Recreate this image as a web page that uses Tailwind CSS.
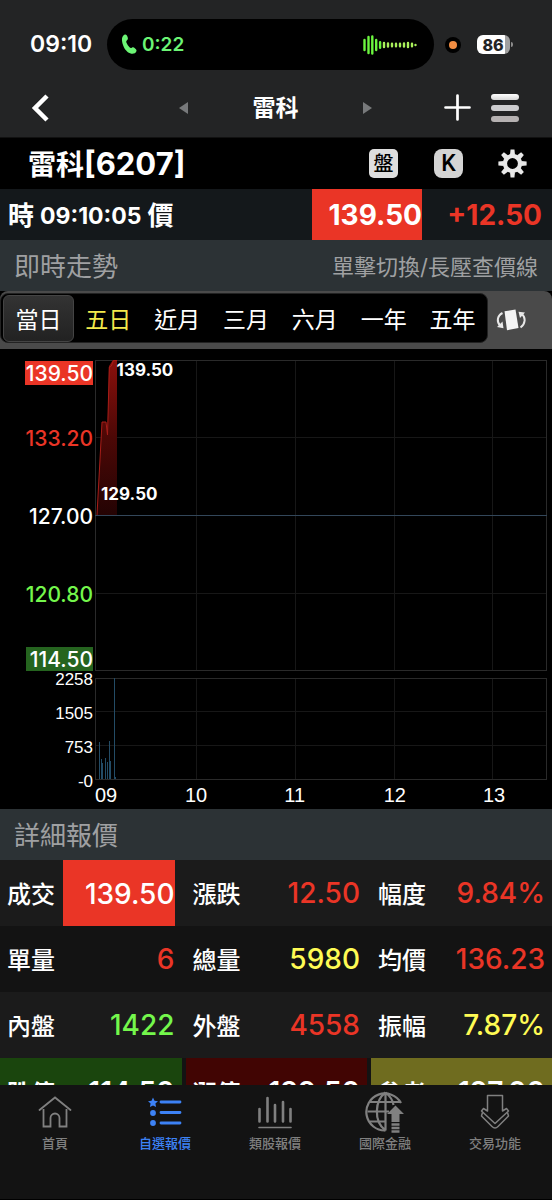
<!DOCTYPE html>
<html lang="zh-Hant">
<head>
<meta charset="utf-8">
<meta name="viewport" content="width=device-width, initial-scale=1">
<title>雷科 6207</title>
<script src="https://cdn.jsdelivr.net/npm/@tailwindcss/browser@4"></script>
</head>
<body class="flex h-screen flex-col overflow-hidden bg-black font-['Inter','Noto_Sans_CJK_TC',sans-serif] text-white">

<header class="shrink-0 bg-[#232425] pt-[19px]">
  <!-- status bar -->
  <div class="flex h-[51px] items-center pl-[30px] pr-[39px]">
    <span class="w-[77px] text-[23px] leading-none font-semibold">09:10</span>
    <div class="flex h-[51px] flex-1 items-center rounded-full bg-black pl-[14px] pr-[17px] text-[#6cf575]">
      <svg class="h-[21px] w-4" viewBox="0 0 16 21" fill="currentColor" aria-hidden="true"><path d="M1 4.500C1.300 2 2.800.5 4.300.4c1.200 0 1.700 1 2.300 2.700.6 1.800.3 2.500-.8 3.500-.7.7-.7 1.300-.2 2.400.7 1.600 1.600 3 2.900 4.200.9.9 1.400.9 2.300.5 1.300-.6 2-.4 3.300.8 1.300 1.100 1.800 1.900 1.200 3-.8 1.600-2.600 2.600-4.900 2.200C6.800 19 3.600 15.600 2.200 11.500 1.300 9 .8 6.700 1 4.500Z"/></svg>
      <span class="ml-[5px] text-[19px] leading-none font-semibold">0:22</span>
      <svg class="ml-auto h-5 w-[54px]" viewBox="0 0 54 20" stroke="#6cf53f" stroke-width="2.400" stroke-linecap="round" fill="none" aria-hidden="true"><path d="M1.500 5v10M5.500 2v16M9.300 1.500v17M13.200 5v10M17.100 7.300v5.400"/><path stroke="#a9f05a" d="M21 8v4M25 8.500v3M29 8.700v2.600M33 8.700v2.600M37 8.700v2.600M41 8.500v3M45 8v4M49 8.700v2.600M52.500 10v.1"/></svg>
    </div>
    <span class="ml-[11px] flex size-4 items-center justify-center rounded-full bg-black"><span class="size-2 rounded-full bg-[#f08c42]"></span></span>
    <span class="ml-4 flex h-[19px] w-[33px] items-center justify-center rounded-md bg-linear-to-r from-white from-86% to-[#a0a0a0] to-86% pr-px text-[16px] leading-none font-extrabold text-[#232425]">86</span>
    <span class="ml-px h-[5px] w-[2px] rounded-r-full bg-[#8c8c8c]"></span>
  </div>
  <!-- navigation bar -->
  <div class="flex h-[68px] items-center justify-between border-b border-[#111] pl-[31px] pr-[33px] pt-2">
    <button class="w-[76px]" aria-label="返回"><svg class="h-7 w-[18px]" viewBox="0 0 18 28" fill="none" stroke="#fff" stroke-width="4.500" aria-hidden="true"><path d="M16 2 4 14l12 12"/></svg></button>
    <div class="flex items-center">
      <button aria-label="上一檔"><svg class="h-3 w-[9px]" viewBox="0 0 9 12" fill="#77797b" aria-hidden="true"><path d="M9 0v12L0 6z"/></svg></button>
      <h1 class="w-[175px] pt-[2px] text-center text-[23px] leading-none font-bold">雷科</h1>
      <button aria-label="下一檔"><svg class="h-3 w-[9px]" viewBox="0 0 9 12" fill="#77797b" aria-hidden="true"><path d="M0 0v12l9-6z"/></svg></button>
    </div>
    <div class="flex items-center gap-5">
      <button aria-label="新增"><svg class="size-[27px]" viewBox="0 0 27 27" fill="none" stroke="#fff" stroke-width="2.700" stroke-linecap="round" aria-hidden="true"><path d="M13.500 1.500v24M1.500 13.500h24"/></svg></button>
      <button aria-label="選單" class="flex w-7 flex-col gap-[5px]"><span class="h-[6px] rounded-full bg-linear-to-b from-white to-[#d8d8d8]"></span><span class="h-[6px] rounded-full bg-[#cdcdcf]"></span><span class="h-[6px] rounded-full bg-[#b5b1b1]"></span></button>
    </div>
  </div>
</header>

<main class="min-h-0 flex-1 overflow-hidden">
  <div class="flex h-[51px] items-center pl-7 pr-[25px]">
    <h2 class="flex-1 text-[28px] leading-none font-bold">雷科<span class="text-[31px] leading-none">[6207]</span></h2>
    <div class="flex items-center gap-9">
      <button class="flex size-[29px] items-center justify-center rounded-[5px] bg-[#dedede] text-[20px] leading-none font-medium text-black">盤</button>
      <button class="flex size-[29px] items-center justify-center rounded-lg bg-[#d4d4d4] font-['Roboto'] text-[23px] leading-none font-medium text-black">K</button>
      <button aria-label="設定" class="-ml-px"><svg class="size-[29px]" viewBox="-15 -15 30 30" aria-hidden="true"><g fill="#e8e8e8"><path id="tooth" d="M-2.600-9-2-14.600h4L2.600-9z"/><use href="#tooth" transform="rotate(45)"/><use href="#tooth" transform="rotate(90)"/><use href="#tooth" transform="rotate(135)"/><use href="#tooth" transform="rotate(180)"/><use href="#tooth" transform="rotate(225)"/><use href="#tooth" transform="rotate(270)"/><use href="#tooth" transform="rotate(315)"/></g><circle r="7.800" fill="none" stroke="#e8e8e8" stroke-width="4.400"/></svg></button>
    </div>
  </div>

  <div class="flex h-[51px] items-center bg-[#14181b] font-bold">
    <p class="flex flex-1 items-center gap-[6px] pl-2 pt-[3px] text-[26px] leading-none">時<span class="text-[23px] leading-none">09:10:05</span>價</p>
    <span class="flex h-full w-[110px] items-center justify-end bg-[#ea3526] text-[28px]">139.50</span>
    <span class="w-[130px] pr-[10px] text-right text-[28px] text-[#ea3526]">+12.50</span>
  </div>

  <div class="flex h-[51px] items-center justify-between bg-[#2c3235] pt-[3px] pl-[14px] pr-[14px] text-[#9fa0a2]">
    <h3 class="text-[26px] leading-none">即時走勢</h3>
    <p class="text-[22px] leading-none">單擊切換/長壓查價線</p>
  </div>

  <!-- period tabs -->
  <div class="flex h-[58px] items-center rounded-t-lg bg-[#4a4a4a] pb-1">
    <div role="tablist" class="flex h-[50px] flex-1 items-center rounded-lg border border-[#222] bg-black pl-[2px] text-[23px] leading-none font-normal">
      <button role="tab" aria-selected="true" class="h-[47px] flex-1 rounded-md border border-[#444] bg-linear-to-b from-[#333] to-[#222] pt-1">當日</button>
      <button role="tab" class="h-full flex-1 pt-1 text-[#f4e94c]">五日</button>
      <button role="tab" class="h-full flex-1 pt-1">近月</button>
      <button role="tab" class="h-full flex-1 pt-1">三月</button>
      <button role="tab" class="h-full flex-1 pt-1">六月</button>
      <button role="tab" class="h-full flex-1 pt-1">一年</button>
      <button role="tab" class="h-full flex-1 pt-1">五年</button>
    </div>
    <button aria-label="橫向顯示" class="w-16 pt-1 pl-2"><svg class="h-6 w-[30px]" viewBox="0 0 30 24" aria-hidden="true"><path d="M8.500 3.300 19.500 1.500 22.500 20 11 22.300z" fill="#f4f4f4"/><g fill="none" stroke="#e8e8e8" stroke-width="2"><path d="M6.500 5C1 8 .3 14 4.500 18"/><path d="M24.500 19.500c5-3.500 5.500-10 1.300-13.500"/></g><path d="M7.500 20.300 1 19 6.500 13.500zM22.500 3.800l6.500.7-5 5.500z" fill="#e8e8e8"/></svg></button>
  </div>

  <!-- intraday chart -->
  <section aria-label="走勢圖" class="flex h-[460px] pt-[11px] pr-[5px]">
    <div class="flex w-[95px] shrink-0 flex-col items-end pr-[2px] pt-px text-[21px] leading-none font-medium">
      <span class="flex h-6 items-center bg-[#ea3526] pl-px">139.50</span>
      <span class="mt-[14px] flex h-[78px] items-center text-[#ea3526]">133.20</span>
      <span class="flex h-[78px] items-center">127.00</span>
      <span class="flex h-[78px] items-center text-[#74f74c]">120.80</span>
      <span class="mt-[14px] flex h-6 items-center bg-[#25641f] pl-[4px]">114.50</span>
      <div class="flex flex-col items-end font-['Liberation_Sans'] text-[17px] leading-none font-normal">
        <span class="flex h-[16px] items-center">2258</span>
        <span class="mt-[18px] flex h-[16px] items-center">1505</span>
        <span class="mt-[18px] flex h-[16px] items-center">753</span>
        <span class="mt-[18px] flex h-[16px] items-center">-0</span>
      </div>
    </div>
    <div class="relative flex-1">
      <svg class="block h-[420px] w-full" viewBox="0 0 452 420" preserveAspectRatio="none" fill="none" aria-hidden="true">
        <defs><linearGradient id="fall" x1="0" y1="0" x2="0" y2="1"><stop offset="0" stop-color="#8a100c"/><stop offset=".5" stop-color="#4c0806"/><stop offset="1" stop-color="#240303"/></linearGradient></defs>
        <g stroke="#171717" shape-rendering="crispEdges"><path d="M101.500 0v310M200.500 0v310M299.500 0v310M397.500 0v310M0 77.500h452M0 233.500h452M101.500 318v101M200.500 318v101M299.500 318v101M397.500 318v101M0 351.500h452M0 385.500h452"/></g>
        <g stroke="#2a2a2a" shape-rendering="crispEdges"><path d="M.5.500h451v310H.5zM.5 318.500h451v101H.5z"/></g>
        <path d="M2 155 7 62h4l1.500 12 1.500-68 4-6h4v155z" fill="url(#fall)"/>
        <path d="M2 155 7 62h4l1.500 13 1.800-68 2-1 2.200-5.500H22" stroke="#a81d18"/>
        <path d="M0 155.500h452" stroke="#33475a" shape-rendering="crispEdges"/>
        <path d="M4.500 419v-37M6.500 419v-20M7.500 419v-16M10.500 419v-21M12.500 419v-17M14.500 419v-38M15.500 419v-18M19.500 419V318M20.500 419v-2" stroke="#234c66" shape-rendering="crispEdges"/>
      </svg>
      <span class="absolute top-0 left-[5%] -ml-px text-[17px] leading-5 font-bold">139.50</span>
      <span class="absolute top-[124px] left-[6px] text-[17px] leading-5 font-bold">129.50</span>
      <div class="grid grid-cols-[100px_1fr_1fr_1fr_54px] pt-[5px] font-['Liberation_Sans'] text-[20px] leading-5">
        <span>09</span><span class="-ml-[10px]">10</span><span class="-ml-[10px]">11</span><span class="-ml-[10px]">12</span><span class="-ml-[10px]">13</span>
      </div>
    </div>
  </section>

  <div class="flex h-[51px] items-center bg-[#2c3235] pt-[2px] pl-[14px] text-[#9fa0a2]">
    <h3 class="text-[26px] leading-none">詳細報價</h3>
  </div>

  <!-- quote details -->
  <table class="w-full table-fixed border-separate border-spacing-0 text-left text-[28px] leading-none font-medium">
    <colgroup><col class="w-[63px]"><col><col class="w-[63px]"><col><col class="w-[63px]"><col class="w-[118px]"></colgroup>
    <tbody>
      <tr class="h-[66px] bg-[#1b1b1b]">
        <th scope="row" class="p-0 pt-[3px] pl-[7px] text-[24px] font-medium">成交</th><td class="border-r-4 border-transparent p-0 pr-[7px]"><div class="flex h-[66px] items-center justify-end bg-[#ea3526] pt-px">139.50</div></td>
        <th scope="row" class="p-0 pt-[3px] pl-[7px] text-[24px] font-medium">漲跌</th><td class="border-r-4 border-transparent p-0 pr-[7px] text-right text-[#ea3526]">12.50</td>
        <th scope="row" class="p-0 pt-[3px] pl-[7px] text-[24px] font-medium">幅度</th><td class="p-0 pr-[7px] text-right text-[#ea3526]">9.84%</td>
      </tr>
      <tr class="h-[66px] bg-[#131313]">
        <th scope="row" class="p-0 pt-[3px] pl-[7px] text-[24px] font-medium">單量</th><td class="border-r-4 border-transparent p-0 pr-[7px] text-right text-[#ea3526]">6</td>
        <th scope="row" class="p-0 pt-[3px] pl-[7px] text-[24px] font-medium">總量</th><td class="border-r-4 border-transparent p-0 pr-[7px] text-right text-[#fffb54]">5980</td>
        <th scope="row" class="p-0 pt-[3px] pl-[7px] text-[24px] font-medium">均價</th><td class="p-0 pr-[7px] text-right text-[#ea3526]">136.23</td>
      </tr>
      <tr class="h-[66px] bg-[#1b1b1b]">
        <th scope="row" class="p-0 pt-[3px] pl-[7px] text-[24px] font-medium">內盤</th><td class="border-r-4 border-transparent p-0 pr-[7px] text-right text-[#74f74c]">1422</td>
        <th scope="row" class="p-0 pt-[3px] pl-[7px] text-[24px] font-medium">外盤</th><td class="border-r-4 border-transparent p-0 pr-[7px] text-right text-[#ea3526]">4558</td>
        <th scope="row" class="p-0 pt-[3px] pl-[7px] text-[24px] font-medium">振幅</th><td class="p-0 pr-[7px] text-right text-[#fffb54]">7.87%</td>
      </tr>
      <tr class="h-[68px] font-semibold">
        <th scope="row" class="bg-[#1a450d] p-0 pt-[3px] pl-[7px] text-[24px] font-bold">跌停</th><td class="border-r-4 border-[#131313] bg-[#1a450d] p-0 pr-[7px] text-right">114.50</td>
        <th scope="row" class="bg-[#410503] p-0 pt-[3px] pl-[7px] text-[24px] font-bold">漲停</th><td class="border-r-4 border-[#131313] bg-[#410503] p-0 pr-[7px] text-right">139.50</td>
        <th scope="row" class="bg-[#6f6c1f] p-0 pt-[3px] pl-[7px] text-[24px] font-bold">參考</th><td class="bg-[#6f6c1f] p-0 pr-[7px] text-right">127.00</td>
      </tr>
    </tbody>
  </table>
</main>

<nav class="grid h-[115px] shrink-0 grid-cols-5 border-b border-black bg-[#131313] pt-[5px] pr-[2px] text-[13px] leading-5 font-medium text-[#808080]">
  <a href="#home" class="flex flex-col items-center">
    <svg class="h-[43px] w-10" viewBox="0 0 40 43" fill="none" stroke="currentColor" stroke-width="1.800" aria-hidden="true"><path d="M4.500 20 20 7.500 35.500 20" stroke-linecap="round"/><path d="M8.500 19v17.500h7V28a4.500 4.500 0 0 1 9 0v8.500h7V19"/></svg>首頁</a>
  <a href="#watchlist" aria-current="page" class="flex flex-col items-center text-[#3d82f5]">
    <svg class="h-[43px] w-10" viewBox="0 0 40 43" fill="currentColor" aria-hidden="true"><path d="m8 7.500 1.500 3.300 3.500.4-2.600 2.400.7 3.500L8 15.400l-3.100 1.700.7-3.500L3 11.200l3.500-.4z"/><circle cx="8" cy="23" r="2.900"/><circle cx="8" cy="33" r="2.900"/><path d="M16 12h19M16 22.500h19M16 33h19" stroke="currentColor" stroke-width="2.800" stroke-linecap="round"/></svg>自選報價</a>
  <a href="#sectors" class="flex flex-col items-center">
    <svg class="h-[43px] w-10" viewBox="0 0 40 43" fill="none" stroke="currentColor" stroke-width="2.600" stroke-linecap="round" aria-hidden="true"><path d="M4.500 19v12.500M12.500 8v23.500M20 15v16.500M28 12v19.500M35.500 19v12.500"/><path d="M4 37.500h32" stroke-width="1.600"/></svg>類股報價</a>
  <a href="#global" class="flex flex-col items-center">
    <svg class="h-[43px] w-10" viewBox="0 0 40 43" fill="none" stroke="currentColor" stroke-width="2.200" aria-hidden="true"><path d="M36 13A18.500 18.500 0 1 0 20.500 40.500"/><path d="M20.500 2.500v38M20.500 2.500C10 10 8 31 20.500 40.500M20.500 2.500c5 4 7.500 8.500 8 12.500M5 12h30.500M2.500 21.500H24M5 31.500h16"/><path d="m30.500 15.500 8.500 8.500h-4.500v8h-8v-8H22z" fill="currentColor" stroke="none"/><path d="M26.500 34.500h8M26.500 38h8M26.500 41.500h8" stroke-width="2.400"/></svg>國際金融</a>
  <a href="#trade" class="flex flex-col items-center">
    <svg class="h-[43px] w-10" viewBox="0 0 40 43" fill="none" stroke="currentColor" stroke-width="1.500" stroke-linejoin="round" aria-hidden="true"><path d="M12.500 5.500h15V21l4-2.500 2 2.500L20 33.500 6.500 21l2-2.500 4 2.500z"/><path d="M7.500 22.500 6.500 26 17 36.500c2 2 4 2 6 0L33.500 26l-1-3.500"/></svg>交易功能</a>
</nav>
</body>
</html>
